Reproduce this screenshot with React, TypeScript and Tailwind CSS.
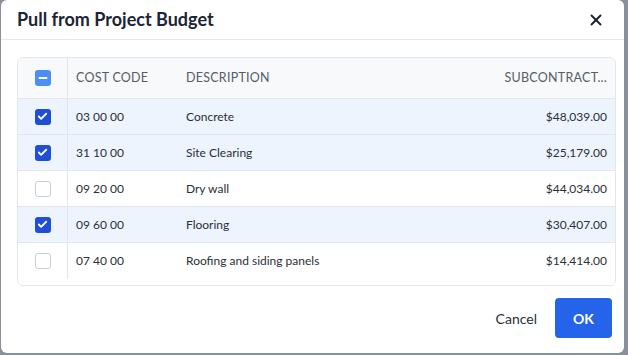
import { X, Check, Minus } from "lucide-react";

const rows = [
  { code: "03 00 00", desc: "Concrete", amount: "$48,039.00", checked: true },
  { code: "31 10 00", desc: "Site Clearing", amount: "$25,179.00", checked: true },
  { code: "09 20 00", desc: "Dry wall", amount: "$44,034.00", checked: false },
  { code: "09 60 00", desc: "Flooring", amount: "$30,407.00", checked: true },
  { code: "07 40 00", desc: "Roofing and siding panels", amount: "$14,414.00", checked: false },
];

function Box({ checked }: { checked: boolean }) {
  if (checked)
    return (
      <span className="flex h-4 w-4 items-center justify-center rounded-[3px] bg-[#1f4fd6]">
        <Check size={11} strokeWidth={4} className="text-white" />
      </span>
    );
  return <span className="block h-4 w-4 rounded-[3px] border border-[#c9ced6] bg-white" />;
}

export default function App() {
  return (
    <div className="h-[355px] w-[628px] bg-[#8a9099] pl-px pr-[4px] pb-[2px]" style={{ fontFamily: "Lato, 'Noto Sans', sans-serif" }}>
      <div className="flex h-full flex-col rounded-md bg-white">
        <header className="flex h-10 items-center justify-between border-b border-[#e6e8eb] pl-4 pr-[19px]">
          <h1 className="text-[18px] font-bold text-[#1b2535]">Pull from Project Budget</h1>
          <X size={18} strokeWidth={2.6} className="text-[#1b2535]" />
        </header>

        <div className="ml-4 mr-2 mt-[17px] overflow-hidden rounded-md border border-[#e3e6ea] text-[12px] text-[#2a2f38]">
          <div className="flex h-[41px] items-center border-b border-[#e3e6ea] bg-[#f8f9fb] text-[12.5px] tracking-[0.25px] text-[#555c67]">
            <div className="flex h-full w-[50px] items-center justify-center border-r border-[#e3e6ea]">
              <span className="flex h-4 w-4 items-center justify-center rounded-[3px] bg-[#4b8ef5]">
                <Minus size={12} strokeWidth={4} className="text-white" />
              </span>
            </div>
            <div className="w-[118px] pl-2">COST CODE</div>
            <div className="flex-1">DESCRIPTION</div>
            <div className="pr-2">SUBCONTRACT...</div>
          </div>
          {rows.map((r, i) => (
            <div
              key={r.code}
              className={`flex items-center ${i === rows.length - 1 ? "h-[42px] pb-[6px]" : "h-9 border-b border-[#e3e6ea]"} ${r.checked ? "bg-[#eef4fe]" : "bg-white"}`}
            >
              <div className="flex h-full w-[50px] items-center justify-center border-r border-[#e3e6ea]">
                <Box checked={r.checked} />
              </div>
              <div className="w-[118px] pl-2">{r.code}</div>
              <div className="flex-1">{r.desc}</div>
              <div className="pr-2">{r.amount}</div>
            </div>
          ))}
        </div>

        <div className="mt-auto mb-[15px] mr-3 flex items-center justify-end gap-[18px]">
          <button className="text-[14px] text-[#2a2f38]">Cancel</button>
          <button className="h-10 w-[57px] rounded bg-[#2563eb] text-[14px] font-bold text-white">OK</button>
        </div>
      </div>
    </div>
  );
}
